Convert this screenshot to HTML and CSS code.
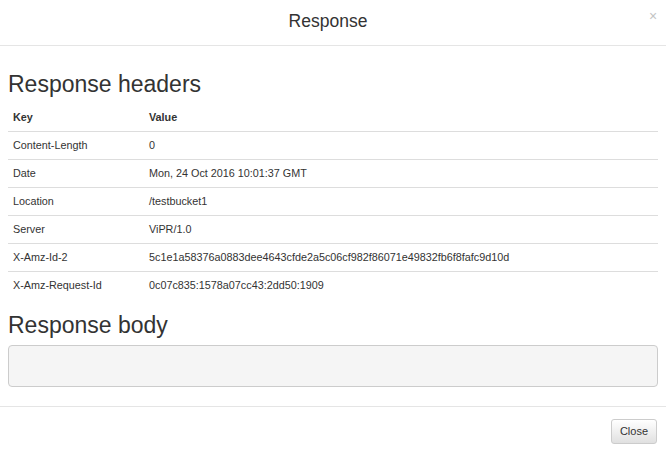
FILE: index.html
```html
<!DOCTYPE html>
<html>
<head>
<meta charset="utf-8">
<link rel="stylesheet" href="styles.css">
</head>
<body>
<div class="modal">
  <div class="modal-header">
    <h4 class="modal-title">Response</h4>
    <button class="close" type="button">×</button>
  </div>
  <div class="modal-body">
    <h3 class="section-title first">Response headers</h3>
    <table class="headers">
      <thead>
        <tr><th class="col-key">Key</th><th>Value</th></tr>
      </thead>
      <tbody>
        <tr><td>Content-Length</td><td>0</td></tr>
        <tr><td>Date</td><td>Mon, 24 Oct 2016 10:01:37 GMT</td></tr>
        <tr><td>Location</td><td>/testbucket1</td></tr>
        <tr><td>Server</td><td>ViPR/1.0</td></tr>
        <tr><td>X-Amz-Id-2</td><td>5c1e1a58376a0883dee4643cfde2a5c06cf982f86071e49832fb6f8fafc9d10d</td></tr>
        <tr><td>X-Amz-Request-Id</td><td>0c07c835:1578a07cc43:2dd50:1909</td></tr>
      </tbody>
    </table>
    <h3 class="section-title">Response body</h3>
    <pre class="body-box"></pre>
  </div>
  <div class="modal-footer">
    <button class="btn" type="button">Close</button>
  </div>
</div>
</body>
</html>
```
FILE: styles.css
```css
* { box-sizing: border-box; }
html, body { margin: 0; padding: 0; background: #fff; }
body {
  font-family: "Liberation Sans", Arial, sans-serif;
  color: #333;
  font-size: 12px;
  line-height: 1.42857;
}
.modal { width: 666px; height: 453px; display: flex; flex-direction: column; }
.modal-header {
  display: flex;
  align-items: flex-start;
  height: 46px;
  padding: 8px 8px 0 8px;
  border-bottom: 1px solid #e5e5e5;
}
.modal-title {
  flex: 1;
  margin: 0;
  text-align: center;
  font-size: 17.5px;
  font-weight: normal;
  line-height: 26px;
  color: #333;
}
.close {
  border: 0;
  background: transparent;
  padding: 0;
  margin: 3px 0 0;
  width: 10px;
  font-family: "Liberation Sans", Arial, sans-serif;
  font-size: 14px;
  line-height: 10px;
  color: #c4c4c4;
  cursor: pointer;
}
.modal-body { padding: 0 8px; }
.section-title {
  margin: 12px 0 6px;
  font-size: 23px;
  font-weight: normal;
  line-height: 28px;
  color: #333;
}
.section-title.first { margin-top: 24px; }
.headers {
  width: 100%;
  border-collapse: collapse;
  border-spacing: 0;
}
.headers th, .headers td {
  padding: 5px;
  text-align: left;
  vertical-align: top;
  font-size: 10.8px;
  line-height: 17px;
}
.headers th { font-weight: bold; border-bottom: 1px solid #ddd; }
.headers tbody tr + tr td { border-top: 1px solid #ddd; }
.col-key { width: 136px; }
.body-box {
  margin: 0;
  height: 42px;
  background: #f5f5f5;
  border: 1px solid #ccc;
  border-radius: 4px;
}
.modal-footer {
  margin-top: 19px;
  border-top: 1px solid #e5e5e5;
  padding: 12px 9px 9px;
  display: flex;
  justify-content: flex-end;
}
.btn {
  font-family: "Liberation Sans", Arial, sans-serif;
  font-size: 11px;
  line-height: 17px;
  padding: 3px 8px;
  color: #333;
  background: linear-gradient(to bottom, #fff 0%, #e0e0e0 100%);
  border: 1px solid #ccc;
  border-radius: 3px;
  cursor: pointer;
}
```
